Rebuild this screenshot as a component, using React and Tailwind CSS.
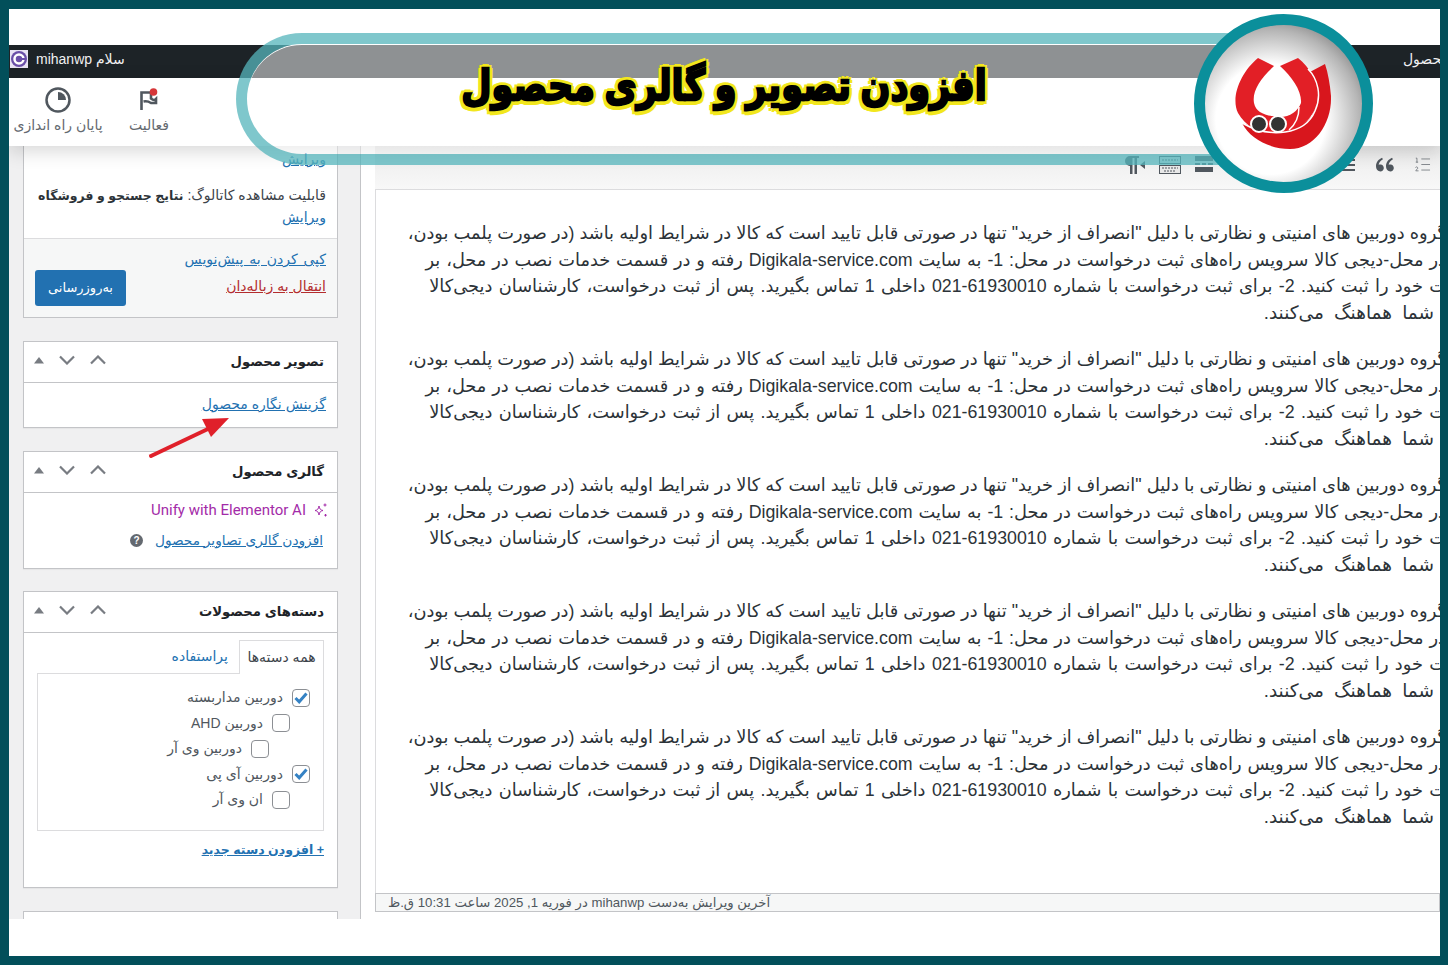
import React from "react"
import { RiDoubleQuotesL } from "react-icons/ri"
import { ListOrdered } from "lucide-react"

const fa = "font-['Liberation_Sans','DejaVu_Sans',sans-serif]"

const PanelControls = () => (
  <div className="flex items-center gap-[13px] pb-[5px] text-[#787c82]">
    <svg width="12" height="8" viewBox="0 0 12 8"><path d="M1 7.500 6 1l5 6.500z" fill="currentColor" /></svg>
    <svg width="18" height="10" viewBox="0 0 18 10" fill="none" stroke="currentColor" strokeWidth="2.200"><path d="M2 1.500 9 8.500 16 1.500" /></svg>
    <svg width="18" height="10" viewBox="0 0 18 10" fill="none" stroke="currentColor" strokeWidth="2.200"><path d="M2 8.500 9 1.500 16 8.500" /></svg>
  </div>
)

const Panel = ({ title, className, children }) => (
  <div className={`ml-[14px] w-[315px] border border-[#c3c4c7] bg-white shadow-[0_1px_1px_rgba(0,0,0,0.04)] ${className}`}>
    <div className="flex h-[41px] items-center justify-between border-b border-[#c3c4c7] pl-[9px] pr-[13px]">
      <PanelControls />
      <h2 dir="rtl" className="text-[13.200px] font-bold text-[#1d2327]">{title}</h2>
    </div>
    {children}
  </div>
)

const Check = ({ checked }) => (
  <span className="flex h-[18px] w-[18px] shrink-0 items-center justify-center rounded-[4px] border border-[#8c8f94] bg-white">
    {checked && (
      <svg width="14" height="12" viewBox="0 0 14 12" fill="none" stroke="#3582c4" strokeWidth="3"><path d="M1.500 6 5.200 9.800 12.500 1.500" /></svg>
    )}
  </span>
)

const CategoryRow = ({ label, checked, pad }) => (
  <div dir="rtl" className={`flex h-[25.500px] items-center gap-[9px] text-[14px] text-[#50575e] ${pad}`}>
    <Check checked={checked} />
    <span>{label}</span>
  </div>
)

const Paragraph = () => (
  <div dir="rtl" className="mb-5 text-[17.800px] leading-[26.500px] text-[#2c3338]">
    <div className="whitespace-nowrap [word-spacing:0.150px]">گروه دوربین های امنیتی و نظارتی با دلیل "انصراف از خرید" تنها در صورتی قابل تایید است که کالا در شرایط اولیه باشد (در صورت پلمب بودن،</div>
    <div className="whitespace-nowrap [word-spacing:0.900px]">در محل-دیجی کالا سرویس راه‌های ثبت درخواست در محل: 1- به سایت Digikala-service.com رفته و در قسمت خدمات نصب در محل، بر</div>
    <div className="whitespace-nowrap [word-spacing:1.400px]">ت خود را ثبت کنید. 2- برای ثبت درخواست با شماره <span dir="ltr" className="inline-block">021-61930010</span> داخلی 1 تماس بگیرید. پس از ثبت درخواست، کارشناسان دیجی‌کالا</div>
    <div className="whitespace-nowrap pr-[12px] text-[18.500px] [word-spacing:5px]">شما هماهنگ می‌کنند.</div>
  </div>
)

const EditorToolbar = () => (
  <div className="flex h-[44px] shrink-0 items-center justify-end border-b border-[#dcdcde] bg-gradient-to-b from-[#ebebeb] to-[#f8f8f8] pb-[6px] text-[#50575e]">
    <svg width="24" height="20" viewBox="0 0 24 20" fill="currentColor" className="mr-[13px]">
      <path d="M8 1h9v2h-2v16h-2.500V3H10.500v16H8v-8a5 5 0 0 1 0-10z" />
      <path d="M23 6v8l-5-4z" />
    </svg>
    <svg width="22" height="18" viewBox="0 0 22 18" fill="none" className="mr-[14px]">
      <rect x="0.500" y="0.500" width="21" height="7" stroke="currentColor" />
      <path d="M3 4h16" stroke="currentColor" strokeDasharray="2 1" />
      <rect x="0.500" y="9.500" width="21" height="8" fill="#e8e8e8" stroke="currentColor" />
      <path d="M3 12h16M5 15h12" stroke="currentColor" strokeDasharray="2 1" />
    </svg>
    <svg width="18" height="17" viewBox="0 0 18 17" fill="currentColor" className="mr-[124px]">
      <rect width="18" height="5" />
      <rect y="7" width="5" height="2" />
      <rect x="7" y="7" width="4" height="2" />
      <rect x="13" y="7" width="5" height="2" />
      <rect y="11" width="18" height="5" />
    </svg>
    <svg width="18" height="12" viewBox="0 0 18 12" fill="currentColor" className="mr-[18px]">
      <rect width="18" height="2" />
      <rect x="4" y="5" width="14" height="2" />
      <rect y="10" width="18" height="2" />
    </svg>
    <RiDoubleQuotesL size={24} className="mr-[16px]" />
    <ListOrdered size={19} strokeWidth={1} className="mr-[8px] text-[#6b7076]" />
  </div>
)

const AdminBar = () => (
  <div className="flex h-[33px] shrink-0 items-center justify-between overflow-hidden bg-[#1d2327] pb-[5px] text-[14px] text-[#f0f0f1]">
    <div className="flex items-center gap-[8px] pl-[1px]">
      <svg width="18" height="18" viewBox="0 0 18 18">
        <rect width="18" height="18" fill="#e9e4f4" />
        <circle cx="9" cy="9" r="8" fill="#6a4fa8" />
        <circle cx="9" cy="9" r="4.500" fill="none" stroke="#fff" strokeWidth="2.500" />
        <path d="M8 9h7" stroke="#6a4fa8" strokeWidth="2" />
      </svg>
      <span dir="rtl">سلام mihanwp</span>
    </div>
    <span dir="rtl" className="-mr-[9px] text-[14px]">محصول</span>
  </div>
)

const TopToolbar = () => (
  <div className="relative z-10 flex h-[68px] shrink-0 gap-[27px] bg-white pl-[5px] pt-[9px] text-[14px] text-[#646970] shadow-[0_5px_18px_rgba(0,0,0,0.16)]">
    <div className="flex w-[88px] flex-col items-center gap-[2px]">
      <svg width="26" height="26" viewBox="0 0 26 26" fill="none">
        <circle cx="13" cy="13" r="11.500" stroke="#50575e" strokeWidth="2.500" />
        <path d="M13 5a8 8 0 0 1 8 8h-8z" fill="#50575e" />
      </svg>
      <span dir="rtl" className="whitespace-nowrap">پایان راه اندازی</span>
    </div>
    <div className="flex flex-col items-center gap-[2px]">
      <svg width="26" height="26" viewBox="0 0 26 26" fill="none">
        <path d="M5.500 23V5.500h9.500v6c3 2.500 4 1.500 5 .5v4h-5c-3-2-5-2-7.500-1.500" stroke="#50575e" strokeWidth="2.600" />
        <circle cx="17.500" cy="5" r="3.800" fill="#d63638" />
      </svg>
      <span dir="rtl">فعالیت</span>
    </div>
  </div>
)

const Sidebar = () => (
  <div className="relative w-[352px] shrink-0 overflow-hidden border-r border-[#c3c4c7] bg-[#f0f0f1]">
    <div className="ml-[14px] w-[315px] border border-t-0 border-[#c3c4c7] bg-white text-[14px] text-[#3c434a]">
      <div dir="rtl" className="px-[11px]">
        <a className="block pt-[3px] leading-[21px] text-[#2271b1] underline">ویرایش</a>
        <p className="mt-[15px] whitespace-nowrap leading-[21px]">قابلیت مشاهده کاتالوگ: <b className="text-[12.500px] font-bold text-[#2c3338]">نتایج جستجو و فروشگاه</b></p>
        <a className="block leading-[21px] text-[#2271b1] underline">ویرایش</a>
      </div>
      <div className="mt-[10px] flex h-[79px] justify-between border-t border-[#dcdcde] bg-[#f6f7f7] pl-[11px] pr-[11px] pt-[10px]">
        <button className="mt-[21px] h-[36px] w-[91px] rounded-[3px] bg-[#2271b1] text-[13px] text-white" dir="rtl">به‌روزرسانی</button>
        <div dir="rtl" className="flex flex-col gap-[6px] leading-[21px]">
          <a className="text-[#2271b1] underline [word-spacing:2px]">کپی کردن به پیش‌نویس</a>
          <a className="text-[#b32d2e] underline">انتقال به زباله‌دان</a>
        </div>
      </div>
    </div>

    <Panel title="تصویر محصول" className="mt-[23px]">
      <div dir="rtl" className="h-[44px] px-[11px] pt-[9px] text-[14px] leading-[24px]">
        <a className="text-[#2271b1] underline">گزینش نگاره محصول</a>
      </div>
    </Panel>

    <Panel title="گالری محصول" className="mt-[23px]">
      <div className="h-[75px] pr-[9px] pt-[6px] text-[13.700px]">
        <div className="flex items-center justify-end gap-[6px] text-[#a32ba8]">
          <span className="font-['Roboto',sans-serif] text-[15px]">Unify with Elementor AI</span>
          <svg width="16" height="16" viewBox="0 0 16 16" fill="none" stroke="#a32ba8">
            <path d="M7 4c.5 3 1.500 4 4 4.500-2.500.5-3.500 1.500-4 4.500-.5-3-1.500-4-4-4.500 2.500-.5 3.500-1.500 4-4.500z" />
            <path d="M13 1.500v3M11.500 3h3M13.500 12v2.500M12.300 13.200h2.500" />
          </svg>
        </div>
        <div className="mt-[9px] flex items-center justify-end gap-[12px] pr-[5px]">
          <span className="flex h-[13px] w-[13px] items-center justify-center rounded-full bg-[#646970] text-[10px] font-bold text-white">?</span>
          <a dir="rtl" className="text-[#2271b1] underline">افزودن گالری تصاویر محصول</a>
        </div>
      </div>
    </Panel>

    <Panel title="دسته‌های محصولات" className="mt-[22px]">
      <div className="h-[254px] px-[13px] pt-[6px]">
        <div className="flex h-[34px] items-center justify-end text-[14px]">
          <a dir="rtl" className="mr-[11px] text-[#2271b1]">پراستفاده</a>
          <div dir="rtl" className="relative z-[1] -mb-px flex h-[34px] w-[85px] items-center justify-center border border-b-0 border-[#dcdcde] bg-white text-[#3c434a]">همه دسته‌ها</div>
        </div>
        <div className="h-[158px] border border-[#dcdcde] pt-[11px]">
          <CategoryRow label="دوربین مدار‌بسته" checked pad="pr-[13px]" />
          <CategoryRow label="دوربین AHD" pad="pr-[33px]" />
          <CategoryRow label="دوربین وی آر" pad="pr-[54px]" />
          <CategoryRow label="دوربین آی پی" checked pad="pr-[13px]" />
          <CategoryRow label="ان وی آر" pad="pr-[33px]" />
        </div>
        <a dir="rtl" className="mt-[10px] block text-[12.500px] font-bold text-[#2271b1] underline">+ افزودن دسته جدید</a>
      </div>
    </Panel>

    <div className="ml-[14px] mt-[23px] h-[40px] w-[315px] border border-[#c3c4c7] bg-white" />

    <svg width="84" height="44" viewBox="0 0 84 44" className="absolute left-[139px] top-[269px]">
      <path d="M3 41 62 13" stroke="#e0202a" strokeWidth="4" strokeLinecap="round" />
      <path d="M81 3 54 4 63 22z" fill="#e0202a" />
    </svg>
  </div>
)

const Banner = () => (
  <div className="absolute left-[236px] top-[33px] z-20 flex h-[132px] w-[1054px] items-center justify-center rounded-full border-[11px] border-[#00909a]/50 bg-white/50 pb-[26px] pr-[78px] shadow-[inset_0_1px_0_#ffffff]">
    <h1 dir="rtl" className="scale-y-[1.2] whitespace-nowrap text-[35px] font-bold text-black [-webkit-text-stroke:2px_#000] [text-shadow:4px_0_0_#f2e71d,-4px_0_0_#f2e71d,0_4px_0_#f2e71d,0_-4px_0_#f2e71d,3px_3px_0_#f2e71d,-3px_3px_0_#f2e71d,3px_-3px_0_#f2e71d,-3px_-3px_0_#f2e71d]">
      افزودن تصویر و گالری محصول
    </h1>
  </div>
)

const LogoBadge = () => (
  <div className="absolute left-[1194px] top-[14px] z-30 flex h-[179px] w-[179px] items-center justify-center rounded-full border-[11px] border-[#0b8f9b] bg-[radial-gradient(circle_at_42%_60%,#ffffff_42%,#b5b5b5_68%,#3f3f3f_100%)] pr-[7px]">
    <svg width="120" height="105" viewBox="0 0 120 105" className="shrink-0">
      <path d="M105 13 88 22C96 35 100 48 92 65 80 80 50 84 22 72 30 88 50 98 70 98 95 98 112 72 111 45 110 33 108 22 105 13z" fill="#d8161d" />
      <path d="M38 7 54 15C40 28 32 40 34 52 36 62 46 65 60 66 70 66 78 60 81 52 82 40 72 26 60 15L78 7C90 16 98 32 98 46 97 62 85 76 68 81 48 85 28 80 18 62 10 45 22 20 38 7z" fill="#e21f26" />
      <path d="M22 72C50 88 85 84 95 60 102 45 98 28 88 18" fill="none" stroke="#fff" strokeWidth="1.500" />
      <path d="M79 56C79 66 76 73 69 79" fill="none" stroke="#fff" strokeWidth="1.500" />
      <circle cx="39" cy="73" r="8" fill="#333" stroke="#fff" strokeWidth="2" />
      <circle cx="58" cy="73" r="8" fill="#333" stroke="#fff" strokeWidth="2" />
    </svg>
  </div>
)

export default function App() {
  return (
    <div className={`relative h-[965px] w-[1448px] overflow-hidden bg-[#024f5a] pb-[9px] pl-[9px] pr-[8px] pt-[9px] ${fa}`}>
      <div className="flex h-full flex-col bg-white pb-[37px] pt-[36px]">
        <div className="flex h-[874px] flex-col overflow-hidden">
          <AdminBar />
          <TopToolbar />
          <div className="flex min-h-0 flex-1">
            <Sidebar />
            <div className="ml-[14px] flex min-w-0 flex-1 flex-col overflow-hidden pb-[7px]">
              <EditorToolbar />
              <div className="min-h-0 flex-1 overflow-hidden border-l border-[#dcdcde] pt-[30px]">
                <div className="-mr-[6px]">
                  {[0, 1, 2, 3, 4].map(i => <Paragraph key={i} />)}
                </div>
              </div>
              <div className="flex h-[19px] shrink-0 items-center border border-[#c3c4c7] bg-[#f6f7f7] pl-[12px] text-[13.200px] text-[#50575e]">
                <span dir="rtl">آخرین ویرایش به‌دست mihanwp در فوریه 1, 2025 ساعت 10:31 ق.ظ</span>
              </div>
            </div>
          </div>
        </div>
      </div>
      <Banner />
      <LogoBadge />
    </div>
  )
}
